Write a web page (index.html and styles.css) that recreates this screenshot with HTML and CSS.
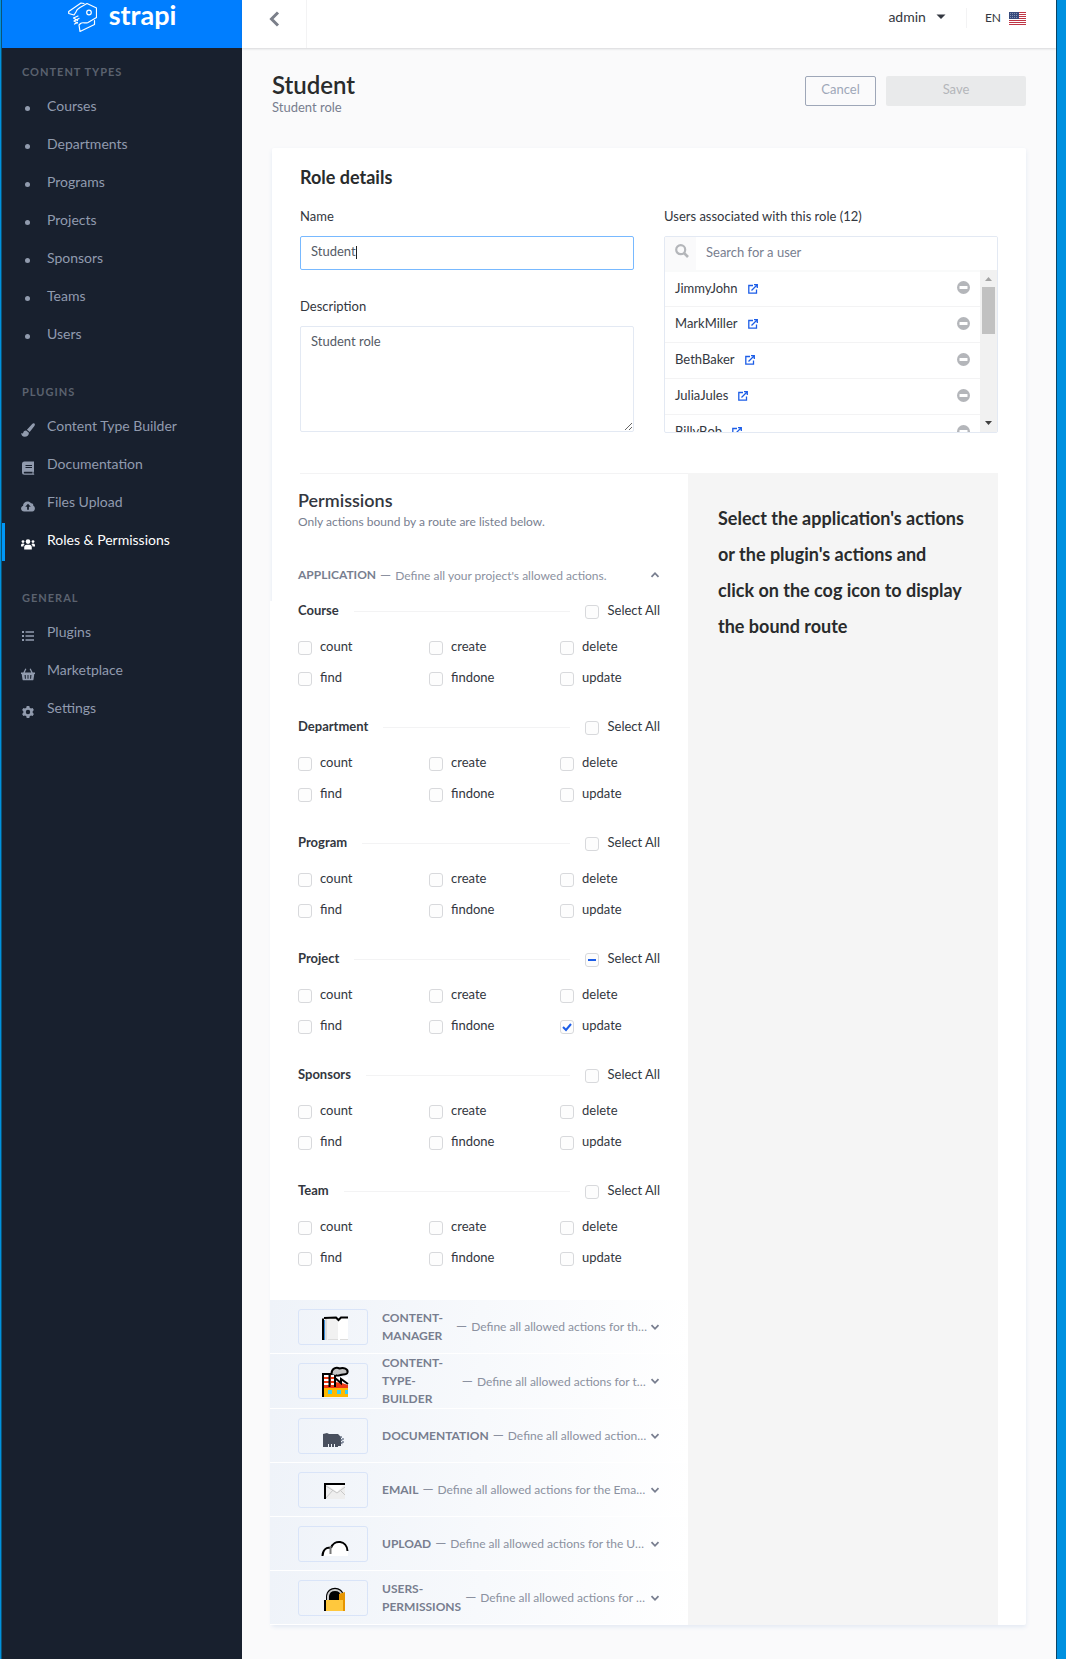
FILE: index.html
```
<!DOCTYPE html>
<html lang="en">
<head>
<meta charset="utf-8">
<title>Student - Roles &amp; Permissions</title>
<meta name="viewport" content="width=device-width, initial-scale=1">
<link rel="stylesheet" href="styles.css">
</head>
<body>
<svg class="sprite" aria-hidden="true">
  <symbol id="link-out" viewBox="0 0 10 10"><path d="M5 1.500H.8v7.700h7.700V5.500M3.500 6.500 9 1M6 .7h3.300V4" fill="none" stroke="currentColor" stroke-width="1.300"/></symbol>
  <symbol id="minus" viewBox="0 0 13 13"><circle cx="6.500" cy="6.500" r="6.500" fill="#b4b6ba"/><rect x="2.500" y="5" width="8" height="3" rx=".5" fill="#fff"/></symbol>
  <symbol id="down" viewBox="0 0 10 10"><path d="M1.500 3.200 5 6.800l3.500-3.600" fill="none" stroke="#787e8f" stroke-width="1.800"/></symbol>
  <symbol id="up" viewBox="0 0 10 10"><path d="M1.500 6.800 5 3.200l3.500 3.600" fill="none" stroke="#787e8f" stroke-width="1.800"/></symbol>
</svg>
<div class="app">
  <aside class="sidebar">
    <a class="brand" href="#">
      <svg class="brand-mark" viewBox="0 0 29 31" fill="none" stroke="#fff" stroke-width="1.200" stroke-linejoin="round" stroke-linecap="round"><path d="M8 10 6 13 .7 11.500V9.500L13 1l3 .5M8 10c.5-3 2-3 4-4.500L19 1.500 28.500 6v9.500L20 20.500c-3 1.500-5-1-7.500 1L11 23l1 6.500 14.500-7v-4M5.500 16l4.500-2M6 19l5-2.500M6.500 22l3-1.500M5.500 16l4 2.500M6 19l3.500 2"/><circle cx="21" cy="10.500" r="2.300"/></svg>
      <span>strapi</span>
    </a>
    <nav>
      <h2>Content types</h2>
      <ul>
        <li><a href="#"><i class="dot"></i>Courses</a></li>
        <li><a href="#"><i class="dot"></i>Departments</a></li>
        <li><a href="#"><i class="dot"></i>Programs</a></li>
        <li><a href="#"><i class="dot"></i>Projects</a></li>
        <li><a href="#"><i class="dot"></i>Sponsors</a></li>
        <li><a href="#"><i class="dot"></i>Teams</a></li>
        <li><a href="#"><i class="dot"></i>Users</a></li>
      </ul>
      <h2>Plugins</h2>
      <ul>
        <li><a href="#"><svg viewBox="0 0 14 14"><path d="M13.400.6c.8.700.5 1.500 0 2.300L8.700 9 5.900 6.800 11.200 1c.7-.7 1.500-1 2.200-.4zM5.200 7.500l2.700 2.200c.2 2.600-1.700 4-4.200 4C1.500 13.700.3 12.200.2 10c1 .7 1.700.7 2-.3.5-1.500 1.500-2.300 3-2.200z"/></svg>Content Type Builder</a></li>
        <li><a href="#"><svg viewBox="0 0 14 14"><path fill-rule="evenodd" d="M3.500.5H13v10l-.4.700v1.600h.6v.9H3.500A2.500 2.500 0 0 1 1 11.200V3A2.500 2.500 0 0 1 3.500.500zM4.500 4v1H11V4zm0 2v1H11V6zM3.500 10.800c-1 0-1 1.800 0 1.800h8v-1.800z"/></svg>Documentation</a></li>
        <li><a href="#"><svg viewBox="0 0 14 14"><path fill-rule="evenodd" d="M3.200 12.500C-.8 12.300-.7 7.500 2 7c0-5 6-6 8-2.700 1.500-.2 2.500.8 2.300 2.400 2.500 1 2 5.800-1 5.800zM7 4.800 4.200 7.700h1.900v3h1.800v-3h1.900z"/></svg>Files Upload</a></li>
        <li><a class="active" href="#"><svg viewBox="0 0 14 14"><circle cx="7" cy="4.600" r="2.300"/><circle cx="2" cy="4.600" r="1.400"/><circle cx="12" cy="4.600" r="1.400"/><path d="M3.200 12.500v-2c0-1.800 1-2.700 2.300-2.700h3c1.400 0 2.300.9 2.300 2.700v2zM0 9c0-1.600.6-2.400 1.700-2.400 1 0 1.700.3 1.900.7C2.800 8 2.500 8.600 2.400 9.500H0zM14 9c0-1.600-.6-2.400-1.700-2.400-1 0-1.700.3-1.900.7.800.7 1.100 1.300 1.200 2.200H14z"/></svg>Roles &amp; Permissions</a></li>
      </ul>
      <h2>General</h2>
      <ul>
        <li><a href="#"><svg viewBox="0 0 14 14"><path d="M1 2h2v2H1zM4.500 2.300H13v1.400H4.500zM1 6h2v2H1zM4.500 6.300H13v1.400H4.500zM1 10h2v2H1zM4.500 10.300H13v1.400H4.500z"/></svg>Plugins</a></li>
        <li><a href="#"><svg viewBox="0 0 14 14"><path fill-rule="evenodd" d="M4.300 1.500 5.400 2 3.800 5.500h6.400L8.600 2l1.100-.5 2 4H14V7h-.7l-.8 5.400c-.1.600-.5.900-1 .9h-9c-.5 0-.9-.3-1-.9L.7 7H0V5.500h2.300zM3.600 8l.3 3.800h1L4.700 8zM6.500 8v3.800h1V8zm2.800 0-.2 3.800h1l.3-3.800z"/></svg>Marketplace</a></li>
        <li><a href="#"><svg viewBox="0 0 14 14"><path fill-rule="evenodd" d="M5.700 1h2.600l.4 1.700 1.300.7 1.600-.5 1.300 2.200-1.200 1.200v1.400l1.200 1.200-1.300 2.200-1.600-.5-1.300.7-.4 1.700H5.700l-.4-1.700-1.300-.7-1.600.5-1.300-2.200 1.200-1.200V6.300L1.100 5.100l1.300-2.200 1.600.5 1.300-.7zM7 4.800a2.200 2.200 0 1 0 0 4.400 2.200 2.200 0 0 0 0-4.400z"/></svg>Settings</a></li>
      </ul>
    </nav>
  </aside>

  <div class="page">
    <header class="topbar">
      <button class="back" aria-label="Back"><svg width="11" height="16" viewBox="0 0 11 16"><path d="M9 1.500 2.500 8 9 14.500" fill="none" stroke="#7b7f8a" stroke-width="3"/></svg></button>
      <div class="tools">
        <button class="user">admin <svg width="10" height="6" viewBox="0 0 10 6"><path d="M.5.5h9L5 5z" fill="#333740"/></svg></button>
        <button class="lang">EN <svg width="17" height="13" viewBox="0 0 17 13"><path fill="#fff" d="M0 0h17v13H0z"/><path d="M0 .5h17M0 2.500h17M0 4.500h17M0 6.500h17M0 8.500h17M0 10.500h17M0 12.500h17" stroke="#bf3545"/><path fill="#374a7c" d="M0 0h10v7H0z"/><path d="M1 1.500h8M1 3.500h8M1 5.500h8" stroke="#8290b0" stroke-dasharray="1 1"/></svg></button>
      </div>
    </header>

    <main>
      <div class="heading">
        <div>
          <h1>Student</h1>
          <p>Student role</p>
        </div>
        <div class="actions">
          <button class="cancel">Cancel</button>
          <button class="save" disabled>Save</button>
        </div>
      </div>

      <section class="card">
        <h2 class="card-title">Role details</h2>
        <div class="details">
          <div class="fields">
            <label for="name">Name</label>
            <div class="name-box"><input id="name" class="control focused" type="text" value="Student"><i class="caret"></i></div>
            <label for="description">Description</label>
            <textarea id="description" class="control">Student role</textarea>
          </div>
          <div class="fields">
            <label for="search">Users associated with this role (12)</label>
            <div class="users">
              <div class="search">
                <span class="search-icon"><svg width="14" height="14" viewBox="0 0 14 14"><circle cx="5.700" cy="5.700" r="4.500" fill="none" stroke="#b4b6ba" stroke-width="2.200"/><path d="m9 9 4 4" stroke="#b4b6ba" stroke-width="2.600"/></svg></span>
                <input id="search" type="text" placeholder="Search for a user">
              </div>
              <div class="user-area">
                <ul class="user-list">
                  <li>JimmyJohn <a href="#" aria-label="Open JimmyJohn"><svg><use href="#link-out"/></svg></a><button aria-label="Remove JimmyJohn"><svg><use href="#minus"/></svg></button></li>
                  <li>MarkMiller <a href="#" aria-label="Open MarkMiller"><svg><use href="#link-out"/></svg></a><button aria-label="Remove MarkMiller"><svg><use href="#minus"/></svg></button></li>
                  <li>BethBaker <a href="#" aria-label="Open BethBaker"><svg><use href="#link-out"/></svg></a><button aria-label="Remove BethBaker"><svg><use href="#minus"/></svg></button></li>
                  <li>JuliaJules <a href="#" aria-label="Open JuliaJules"><svg><use href="#link-out"/></svg></a><button aria-label="Remove JuliaJules"><svg><use href="#minus"/></svg></button></li>
                  <li>BillyBob <a href="#" aria-label="Open BillyBob"><svg><use href="#link-out"/></svg></a><button aria-label="Remove BillyBob"><svg><use href="#minus"/></svg></button></li>
                </ul>
                <div class="scrollbar" aria-hidden="true">
                  <svg width="17" height="17" viewBox="0 0 17 17"><path d="M5 11h7L8.500 7z" fill="#a3a3a3"/></svg>
                  <i class="thumb"></i>
                  <svg width="17" height="17" viewBox="0 0 17 17"><path d="M5 6h7l-3.500 4z" fill="#404040"/></svg>
                </div>
              </div>
            </div>
          </div>
        </div>

        <div class="columns">
          <div class="permissions">
            <div class="perm-head">
              <h2>Permissions</h2>
              <p>Only actions bound by a route are listed below.</p>
            </div>
            <div class="plugin open">
              <div class="plugin-text"><b>APPLICATION</b><span class="about"><i>—</i>Define all your project's allowed actions.</span></div>
              <svg class="chev"><use href="#up"/></svg>
            </div>
            <div class="groups">
              <fieldset>
                <div class="group-head"><h3>Course</h3><hr><label><input type="checkbox">Select All</label></div>
                <div class="checks"><label><input type="checkbox">count</label><label><input type="checkbox">create</label><label><input type="checkbox">delete</label><label><input type="checkbox">find</label><label><input type="checkbox">findone</label><label><input type="checkbox">update</label></div>
              </fieldset>
              <fieldset>
                <div class="group-head"><h3>Department</h3><hr><label><input type="checkbox">Select All</label></div>
                <div class="checks"><label><input type="checkbox">count</label><label><input type="checkbox">create</label><label><input type="checkbox">delete</label><label><input type="checkbox">find</label><label><input type="checkbox">findone</label><label><input type="checkbox">update</label></div>
              </fieldset>
              <fieldset>
                <div class="group-head"><h3>Program</h3><hr><label><input type="checkbox">Select All</label></div>
                <div class="checks"><label><input type="checkbox">count</label><label><input type="checkbox">create</label><label><input type="checkbox">delete</label><label><input type="checkbox">find</label><label><input type="checkbox">findone</label><label><input type="checkbox">update</label></div>
              </fieldset>
              <fieldset>
                <div class="group-head"><h3>Project</h3><hr><label><input class="some" type="checkbox">Select All</label></div>
                <div class="checks"><label><input type="checkbox">count</label><label><input type="checkbox">create</label><label><input type="checkbox">delete</label><label><input type="checkbox">find</label><label><input type="checkbox">findone</label><label><input type="checkbox" checked>update</label></div>
              </fieldset>
              <fieldset>
                <div class="group-head"><h3>Sponsors</h3><hr><label><input type="checkbox">Select All</label></div>
                <div class="checks"><label><input type="checkbox">count</label><label><input type="checkbox">create</label><label><input type="checkbox">delete</label><label><input type="checkbox">find</label><label><input type="checkbox">findone</label><label><input type="checkbox">update</label></div>
              </fieldset>
              <fieldset>
                <div class="group-head"><h3>Team</h3><hr><label><input type="checkbox">Select All</label></div>
                <div class="checks"><label><input type="checkbox">count</label><label><input type="checkbox">create</label><label><input type="checkbox">delete</label><label><input type="checkbox">find</label><label><input type="checkbox">findone</label><label><input type="checkbox">update</label></div>
              </fieldset>
            </div>

            <div class="plugin">
              <span class="logo"><svg viewBox="0 0 70 36"><path fill="#f1f1f1" d="M27 9h14v22H27z"/><path fill="#fff" d="M40 9h10v22H40z"/><path fill="#ddd" d="M27 10h2v21h-2zM30 30h10v1H30zM42 30h8v1h-8z"/><path fill="#3a8fdc" d="M25 11h2v20h-2z"/><path d="M25 31V9.500M26 9l12-.5 2.500 2.500 2.500-2.500h7" fill="none" stroke="#000" stroke-width="2"/></svg></span>
              <div class="plugin-text"><b>CONTENT-MANAGER</b><span class="about"><i>—</i>Define all allowed actions for the Content-manager plugin.</span></div>
              <svg class="chev"><use href="#down"/></svg>
            </div>
            <div class="plugin">
              <span class="logo"><svg viewBox="0 0 70 36"><path fill="#fff" d="M37 14h13v8H37z"/><path fill="#ee3a15" d="M25 19h12l7 1 6 2v4H25z"/><path fill="#ffb900" d="M25 25h25v9H25z"/><path fill="#ee3a15" d="M26 12h11v9H26z"/><path d="M26 13h5M26 17h5M26 21h5M33 13h4M33 17h4M33 21h4" stroke="#fff" stroke-width="2"/><path fill="#37cdf5" d="M30 27h4v4h-4zM39 27h4v4h-4zM47 27h3v4h-3z"/><path d="M25 34V11h12v13M31.500 11v13M37 15l6 5v-4l7 5" fill="none" stroke="#000" stroke-width="2"/><path d="M33.500 11c0-6 5-7 8-5.500 4-1.500 9 .5 8 4-1 3-5 1.500-7 2.500-3 1-4 1-5 0" fill="#c4c4c4" stroke="#000" stroke-width="2"/></svg></span>
              <div class="plugin-text"><b>CONTENT-TYPE-BUILDER</b><span class="about"><i>—</i>Define all allowed actions for the Content-type-builder plugin.</span></div>
              <svg class="chev"><use href="#down"/></svg>
            </div>
            <div class="plugin">
              <span class="logo"><svg viewBox="0 0 70 36"><path fill="#49505e" d="M25 29V16l4-1 2 1h9l3 3v9h-3v1h-3v-3h-1v3h-2v-3h-1v3h-2v-3h-1v3z"/><path d="m43 18 1 9M45 20v6" stroke="#7b8597" stroke-width="1.500" stroke-dasharray="2 1"/></svg></span>
              <div class="plugin-text"><b>DOCUMENTATION</b><span class="about"><i>—</i>Define all allowed actions for the Documentation plugin.</span></div>
              <svg class="chev"><use href="#down"/></svg>
            </div>
            <div class="plugin">
              <span class="logo"><svg viewBox="0 0 70 36"><path fill="#eee" d="M26 11h21v16H26z"/><path fill="#fff" d="M28 12h19l-8 8z"/><path d="m28 14 11 7 8-6M28 26l7-8M47 23l-4-4" fill="none" stroke="#c8c8c8"/><path d="M27 27V12h20" fill="none" stroke="#000" stroke-width="2"/></svg></span>
              <div class="plugin-text"><b>EMAIL</b><span class="about"><i>—</i>Define all allowed actions for the Email plugin.</span></div>
              <svg class="chev"><use href="#down"/></svg>
            </div>
            <div class="plugin">
              <span class="logo"><svg viewBox="0 0 70 36"><path fill="#fff" d="M25 30c0-7 5-8 8-7 4-9 16-8 17 0v7z"/><path d="M24.500 30c0-6 4-9 7.500-8M33 22c3-9 16-8 16.500 3" fill="none" stroke="#000" stroke-width="2"/><path d="M32.500 20v8" stroke="#777" stroke-width="2"/></svg></span>
              <div class="plugin-text"><b>UPLOAD</b><span class="about"><i>—</i>Define all allowed actions for the Upload plugin.</span></div>
              <svg class="chev"><use href="#down"/></svg>
            </div>
            <div class="plugin">
              <span class="logo"><svg viewBox="0 0 70 36"><path d="M28 21v-5c1-11 17-11 18 0v5z" fill="#000"/><path d="M30 21v-5c1-8 13-8 14 0" fill="none" stroke="#ccc" stroke-width="2"/><path fill="#ffc83d" d="M27 20h20v11H27z"/><path fill="#e69500" d="M41 14l6-2v19h-2V20h-4z"/><path d="M27 31V20" stroke="#000" stroke-width="2"/></svg></span>
              <div class="plugin-text"><b>USERS-PERMISSIONS</b><span class="about"><i>—</i>Define all allowed actions for the Users-permissions plugin.</span></div>
              <svg class="chev"><use href="#down"/></svg>
            </div>
          </div>
          <aside class="help">Select the application's actions or the plugin's actions and click on the cog icon to display the bound route</aside>
        </div>
      </section>
    </main>
  </div>
</div>
</body>
</html>
```
FILE: styles.css
```
*, *::before, *::after { box-sizing: border-box; }
body { margin: 0; font: 13px/18px Lato, "Liberation Sans", sans-serif; color: #333740; }
h1, h2, h3, p, ul { margin: 0; padding: 0; list-style: none; }
a { color: inherit; text-decoration: none; }
button, input, textarea { font: inherit; color: inherit; margin: 0; }
button { background: none; border: 0; padding: 0; cursor: pointer; }
i { font-style: normal; }
svg { flex: none; display: block; }
.sprite { position: absolute; width: 0; height: 0; }

.app { display: flex; min-height: 100vh; border: solid #0091e0; border-width: 0 9px 0 1px; }

/* Left menu */
.sidebar { flex: none; width: 241px; background: #18202e; border-left: 1px solid #0a5577; }
.brand { display: flex; justify-content: center; gap: 12px; height: 48px; padding: 2px 0 0; background: #007eff; color: #fff; font-size: 27px; line-height: 26px; font-weight: 700; }
.brand-mark { width: 29px; height: 31px; }
.sidebar h2 { height: 54px; padding: 28px 20px 0; font-size: 11px; line-height: 18px; font-weight: 700; letter-spacing: 1px; text-transform: uppercase; color: #5b626f; }
.sidebar h2:first-child { height: 41px; padding-top: 15px; }
.sidebar li a { display: flex; align-items: center; height: 38px; padding: 0 20px 4px 17px; border-left: 0 solid #0097f7; font-size: 14px; color: #919bae; }
.sidebar li svg { width: 14px; height: 14px; margin: 8px 12px 0 2px; fill: currentColor; }
.dot { width: 5px; height: 5px; margin: 4px 17px 0 6px; border-radius: 50%; background: currentColor; }
.sidebar li a.active { border-left-width: 3px; padding-left: 14px; color: #fff; }

/* Top bar */
.page { flex: 1; min-width: 0; background: #fafafb; border-right: 1px solid #0a4568; }
.topbar { display: flex; justify-content: space-between; height: 48px; background: #fff; box-shadow: 0 1px 2px rgba(40, 42, 49, .16); }
.back { display: flex; align-items: center; width: 65px; padding: 0 0 10px 27px; border-right: 1px solid #f3f3f4; }
.tools { display: flex; align-items: flex-start; padding: 8px 30px 0 0; }
.user, .lang { display: flex; align-items: center; height: 20px; }
.user { gap: 10px; padding: 0 20px 3px 0; font-size: 14px; }
.lang { gap: 8px; padding-left: 18px; border-left: 1px solid #f3f3f4; font-size: 12px; }

/* Content */
main { padding: 22px 30px 33px; }
.heading { display: flex; justify-content: space-between; min-height: 78px; }
h1 { font-size: 24px; line-height: 30px; font-weight: 600; color: #292b2c; }
.heading p { line-height: 14px; color: #787e8f; }
.actions { display: flex; gap: 10px; padding-top: 6px; }
.actions button { height: 30px; padding: 0 0 4px; border-radius: 2px; }
.cancel { width: 71px; border: 1px solid #9ea7b8; color: #9ea7b8; }
.save { width: 140px; background: #e9eaeb; color: #b4b6ba; }

.card { padding: 0 28px; background: #fff; box-shadow: 0 2px 4px #e3e9f3; border-radius: 2px; }
.card-title { padding-top: 17px; height: 58px; font-size: 18px; line-height: 24px; font-weight: 700; color: #292b2c; }
.details { display: grid; grid-template-columns: 1fr 1fr; gap: 30px; padding-bottom: 40px; }
.fields > label { display: block; height: 30px; padding-top: 1px; }
.control { display: block; width: 100%; border: 1px solid #e3e9f3; border-radius: 2px; outline: 0; background: #fff; padding: 0 10px 4px; color: #555b66; }
input.control { height: 34px; }
.name-box { position: relative; margin-bottom: 26px; }
.caret { position: absolute; left: 56px; top: 10px; width: 1px; height: 13px; background: #222; }
.focused { border-color: #78b9ff; }
textarea.control { height: 106px; padding-top: 5px; resize: vertical; }
.users { height: 197px; border: 1px solid #e3e9f3; border-radius: 2px; overflow: hidden; }
.search { display: flex; height: 33px; }
.search-icon { width: 31px; padding: 7px 0 0 10px; background: #fafafb; }
.search input { flex: 1; min-width: 0; border: 0; outline: 0; padding: 0 10px 3px; background: #fff; }
.search input::placeholder { color: #787e8f; opacity: 1; }
.user-area { display: flex; height: 162px; }
.user-list { flex: 1; overflow: hidden; border-top: 2px solid #f9fafa; }
.user-list li { display: flex; align-items: center; height: 36px; padding: 0 10px 3px; border-bottom: 1px solid #f3f3f4; }
.user-list li:first-child { height: 35px; }
.user-list a { margin: 2px auto 0 10px; color: #1c5de7; }
.user-list a svg { width: 10px; height: 10px; }
.user-list button svg { width: 13px; height: 13px; }
.scrollbar { width: 17px; display: flex; flex-direction: column; background: #f1f1f1; }
.thumb { width: 13px; height: 47px; margin: 0 2px auto; background: #c1c1c1; }

/* Permissions */
.columns { display: grid; grid-template-columns: 388fr 310fr; }
.permissions { min-width: 0; border-top: 1px solid #f3f3f4; }
.perm-head { height: 75px; margin-left: -2px; padding-top: 14px; }
.perm-head h2 { font-size: 18px; line-height: 24px; font-weight: 600; }
.perm-head p { font-size: 12px; line-height: 20px; color: #787e8f; }
.plugin, .groups { margin-left: -30px; padding: 0 28px; }
.plugin { display: flex; align-items: center; min-height: 54px; border-bottom: 1px solid #fff; background: linear-gradient(100deg, #eff3f9, #fff); }
.plugin.open { min-height: 52px; background: none; border: 0; }
.logo { flex: none; width: 70px; height: 36px; margin-right: 14px; border: 1px solid #d9e4f8; border-radius: 3px; }
.logo svg { width: 70px; height: 36px; margin: -1px; }
.plugin-text { flex: 1; display: flex; align-items: center; min-width: 0; padding-right: 2px; font-size: 12px; }
.plugin b { flex-shrink: 1.06; font-weight: 700; color: #787e8f; }
.about { min-width: 0; overflow: hidden; text-overflow: ellipsis; white-space: nowrap; color: #8b91a0; }
.about i { margin: 0 4px; font-size: 14px; }
.chev { width: 10px; height: 10px; }
.groups { padding-bottom: 3px; background: #fff; }
fieldset { margin: 0; border: 0; padding: 0 0 31px; min-width: 0; }
.group-head { display: flex; align-items: center; height: 18px; margin-bottom: 18px; }
h3 { font-size: 13px; font-weight: 700; }
hr { flex: 1; height: 1px; margin: 2px 15px 0; border: 0; background: #f3f3f4; }
.checks { display: grid; grid-template-columns: repeat(3, 131px); row-gap: 13px; }
.checks label, .group-head label { display: flex; align-items: center; height: 18px; }
input[type=checkbox] { appearance: none; width: 14px; height: 14px; margin: 3px 8px 0 0; border: 1px solid #d8d9dc; border-radius: 3px; background: #fdfdfd center no-repeat; }
.group-head input[type=checkbox] { margin-right: 9px; }
input[type=checkbox]:checked { background-image: url("data:image/svg+xml,%3Csvg xmlns='http://www.w3.org/2000/svg' width='12' height='12'%3E%3Cpath d='M2 6l3 3 5-6' fill='none' stroke='%231c5de7' stroke-width='2'/%3E%3C/svg%3E"); }
input[type=checkbox].some { background-image: linear-gradient(#1c5de7, #1c5de7); background-size: 8px 2px; }
.help { padding: 27px 32px 27px 30px; background: #f5f5f5; font-size: 18px; line-height: 36px; font-weight: 700; color: #292b2c; }
```
